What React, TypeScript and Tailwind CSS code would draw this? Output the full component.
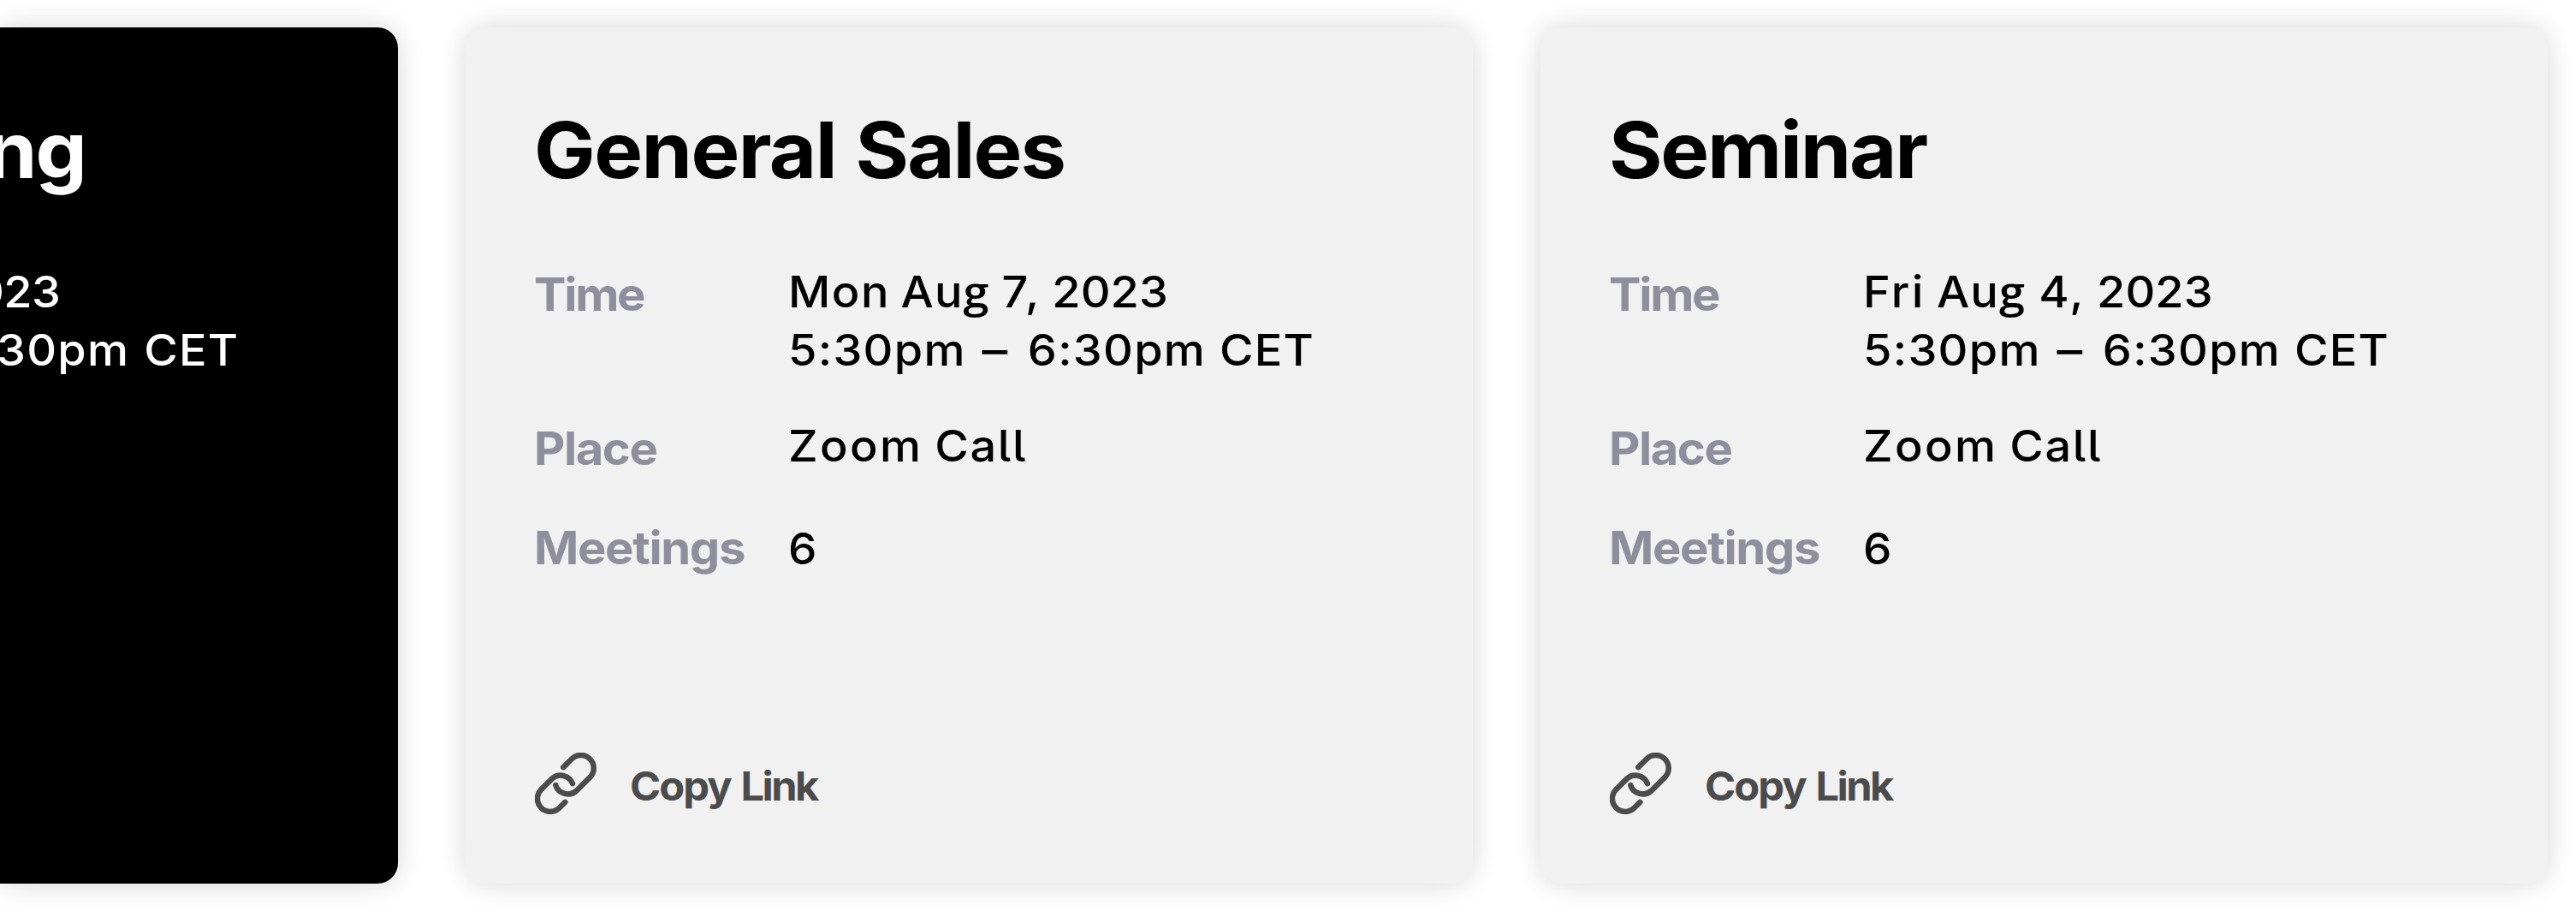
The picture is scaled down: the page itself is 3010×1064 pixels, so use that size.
import React from "react";

function LinkIcon() {
  return (
    <svg
      className="size-[72px] shrink-0"
      viewBox="75 89.5 216 216"
      fill="none"
      stroke="currentColor"
      strokeWidth="19.5"
      strokeLinecap="round"
      strokeLinejoin="round"
      aria-hidden="true"
    >
      <path d="M175 141 L204 112 A45 45 0 0 1 268 176 L221 223 A45 45 0 0 1 148 204" />
      <path d="M181 263 L161 283 A45 45 0 0 1 97 219 L136 180 A45 45 0 0 1 207 198" />
    </svg>
  );
}

function August({ className }: { className: string }) {
  return (
    <span className={className}>
      <span className="tracking-[1px]">Au</span>
      <span className="font-['Open_Sans'] leading-[0] font-semibold">g</span>
    </span>
  );
}

function TimeRange() {
  return (
    <div className="flex origin-left scale-x-[1.06] whitespace-nowrap">
      <span className="ml-[1px] tracking-[1.2px]">5:30pm</span>
      <span className="ml-[19px] inline-block scale-x-110">–</span>
      <span className="ml-[23.5px] tracking-[1.2px]">6:30pm</span>
      <span className="ml-[15px] tracking-[1px]">CET</span>
    </div>
  );
}

type CardProps = { title: React.ReactNode; date: React.ReactNode };

const label = "w-[296px] shrink-0 font-bold text-[54px] text-[#8f8e9d]";
const labelText = "inline-block origin-left scale-x-[1.04]";

function MeetingCard({ title, date }: CardProps) {
  return (
    <article className="flex h-[1000px] w-[1176.5px] shrink-0 flex-col rounded-[24px] bg-[#f1f1f1] pt-[95px] pb-[81px] pl-[80px] text-black shadow-[0_0_32px_rgba(0,0,0,0.16)]">
      <h2 className="flex w-fit origin-left scale-x-[1.05] text-[91px] leading-[96px] font-bold">{title}</h2>
      <dl className="mt-[84px] text-[51px] leading-[68px] font-medium">
        <div className="flex">
          <dt className={`${label} mt-[3px] tracking-[-2.2px]`}>
            <span className={labelText}>Time</span>
          </dt>
          <dd>
            <div className="flex h-[68px] w-fit origin-left scale-x-[1.06]">{date}</div>
            <TimeRange />
          </dd>
        </div>
        <div className="mt-[44px] flex h-[68px]">
          <dt className={`${label} mt-[3px] tracking-[-1.4px]`}>
            <span className={labelText}>Place</span>
          </dt>
          <dd className="flex origin-left scale-x-[1.06]">
            <span className="ml-[1px] tracking-[2.2px]">Zoom</span>
            <span className="ml-[13px] tracking-[1.6px] [font-feature-settings:'cv05'_1]">Call</span>
          </dd>
        </div>
        <div className="mt-[52px] flex h-[68px]">
          <dt className={`${label} mt-[-1px] tracking-[-1.3px]`}>
            <span className={labelText}>Meetings</span>
          </dt>
          <dd className="ml-[1px] origin-left scale-x-[1.04]">6</dd>
        </div>
      </dl>
      <button className="mt-auto ml-[1px] flex items-center gap-[39px] text-[#4b4b4b]">
        <LinkIcon />
        <span className="mt-[6px] flex origin-left scale-x-[1.04] text-[47px] leading-[60px] font-bold">
          <span className="tracking-[-1.9px]">Copy</span>
          <span className="ml-[11.5px] tracking-[-2.5px]">Link</span>
        </span>
      </button>
    </article>
  );
}

function ActiveCard() {
  return (
    <article className="h-[1000px] w-[464.7px] shrink-0 rounded-r-[24px] bg-black pt-[95px] text-white shadow-[0_0_32px_rgba(0,0,0,0.16)]">
      <h2 className="ml-[-16px] w-fit origin-left scale-x-[1.05] text-[91px] leading-[96px] font-bold tracking-[-2px]">
        ng
      </h2>
      <div className="mt-[84px] text-[51px] leading-[68px] font-medium">
        <div className="ml-[-30px] w-fit origin-left scale-x-[1.06] tracking-[-0.6px]">023</div>
        <div className="ml-[-4px] flex w-fit origin-left scale-x-[1.06]">
          <span className="tracking-[1.2px]">30pm</span>
          <span className="ml-[16px] tracking-[1px]">CET</span>
        </div>
      </div>
    </article>
  );
}

export default function App() {
  return (
    <main className="flex h-[1064px] w-[3010px] gap-[79.5px] overflow-hidden bg-white pt-[32px] font-['Inter',sans-serif]">
      <ActiveCard />
      <MeetingCard
        title={
          <>
            <span className="tracking-[-1.5px]">General</span>
            <span className="ml-[21.5px] tracking-[-1.9px]">Sales</span>
          </>
        }
        date={
          <>
            <span className="ml-[1px] tracking-[1.36px]">Mon</span>
            <August className="ml-[12px]" />
            <span className="ml-[14px] tracking-[3.2px]">7,</span>
            <span className="ml-[11px]">2023</span>
          </>
        }
      />
      <MeetingCard
        title={<span className="tracking-[-2.1px]">Seminar</span>}
        date={
          <>
            <span className="ml-[1px] tracking-[2.2px]">Fri</span>
            <August className="ml-[12.5px]" />
            <span className="ml-[15.5px] tracking-[2.1px]">4,</span>
            <span className="ml-[12.5px]">2023</span>
          </>
        }
      />
    </main>
  );
}
